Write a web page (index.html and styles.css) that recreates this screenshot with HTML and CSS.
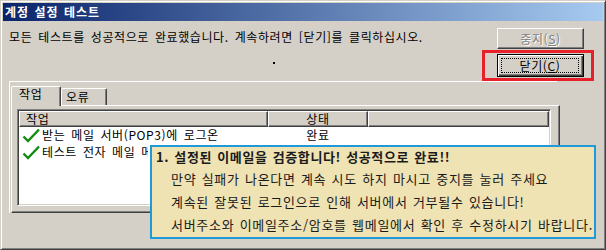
FILE: index.html
```html
<!DOCTYPE html>
<html lang="ko">
<head>
    <meta charset="utf-8">
    <title>계정 설정 테스트</title>
    <link rel="stylesheet" href="styles.css">
</head>
<body>
    <div class="window">
        <div class="titlebar">계정 설정 테스트</div>

        <div class="top">
            <div class="msg">
                <div class="msg-text">모든 테스트를 성공적으로 완료했습니다. 계속하려면 [닫기]를 클릭하십시오.</div>
                <div class="dot"></div>
            </div>
            <div class="buttons">
                <div class="btn btn-stop">중지(<u>S</u>)</div>
                <div class="highlight">
                    <div class="btn btn-close"><span class="focus">닫기(<u>C</u>)</span></div>
                </div>
            </div>
        </div>

        <div class="frame">
            <div class="tabs">
                <div class="tab active">작업</div>
                <div class="tab">오류</div>
            </div>
            <div class="panel">
                <div class="list">
                    <div class="lv-head">
                        <div class="hcell col1">작업</div>
                        <div class="hcell col2">상태</div>
                        <div class="hcell col3"></div>
                    </div>
                    <div class="row">
                        <div class="cell col1">
                            <svg class="check" width="18" height="15" viewBox="0 0 18 15"><path d="M1.5 8.5 L6 13 L17 1.5" fill="none" stroke="#138a13" stroke-width="2.4" stroke-linejoin="miter"/></svg>
                            <span>받는 메일 서버(POP3)에 로그온</span>
                        </div>
                        <div class="cell col2">완료</div>
                    </div>
                    <div class="row">
                        <div class="cell col1">
                            <svg class="check" width="18" height="15" viewBox="0 0 18 15"><path d="M1.5 8.5 L6 13 L17 1.5" fill="none" stroke="#138a13" stroke-width="2.4" stroke-linejoin="miter"/></svg>
                            <span class="clipped">테스트 전자 메일 메시지 보내기</span>
                        </div>
                        <div class="cell col2"></div>
                    </div>
                </div>
            </div>
        </div>

        <div class="tip">
            <div class="tip-title">1. 설정된 이메일을 검증합니다! 성공적으로 완료!!</div>
            <div class="tip-line">만약 실패가 나온다면 계속 시도 하지 마시고 중지를 눌러 주세요</div>
            <div class="tip-line">계속된 잘못된 로그인으로 인해 서버에서 거부될수 있습니다!</div>
            <div class="tip-line">서버주소와 이메일주소/암호를 웹메일에서 확인 후 수정하시기 바랍니다.</div>
        </div>
    </div>
</body>
</html>
```

FILE: styles.css
```css
body {
    margin: 0;
}
.window {
    position: relative;
    width: 606px;
    height: 250px;
    box-sizing: border-box;
    padding: 2px;
    background: #d4d0c8;
    border: 1px solid;
    border-color: #d4d0c8 #404040 #404040 #d4d0c8;
    box-shadow: inset 1px 1px #fff, inset -1px -1px #808080;
    font: 12px "Noto Sans CJK KR", sans-serif;
    letter-spacing: 0.6px;
    word-spacing: 2px;
    color: #000;
    overflow: hidden;
}
.titlebar {
    height: 18px;
    padding-left: 2px;
    line-height: 18px;
    background: linear-gradient(to right, #0a246a, #a6caf0);
    color: #fff;
    font-weight: bold;
    letter-spacing: 1px;
    word-spacing: 1px;
}
.top {
    display: flex;
    height: 60px;
}
.msg {
    flex: 1;
    padding: 8px 0 0 6px;
}
.msg-text {
    line-height: 16px;
}
.dot {
    width: 2px;
    height: 2px;
    margin: 17px 0 0 264px;
    background: #000;
}
.buttons {
    display: flex;
    flex-direction: column;
    width: 87px;
    margin-right: 19px;
}
.btn {
    box-sizing: border-box;
    height: 21px;
    line-height: 19px;
    text-align: center;
    border: 1px solid;
    border-color: #fff #404040 #404040 #fff;
    box-shadow: inset -1px -1px #808080;
}
.btn-stop {
    margin-top: 7px;
    color: #808080;
    text-shadow: 1px 1px #fff;
}
.highlight {
    margin: 1px -10px 0 -15px;
    padding: 1px 7px 1px 12px;
    border: 3px solid #e8202a;
}
.btn-close {
    height: 23px;
    border: 1px solid #000;
    box-shadow: inset 1px 1px #fff, inset -1px -1px #404040, inset -2px -2px #808080;
}
.focus {
    display: block;
    box-sizing: border-box;
    height: 15px;
    margin: 3px 4px 0 3px;
    line-height: 13px;
    border: 1px dotted #000;
}
.frame {
    box-sizing: border-box;
    width: 548px;
    height: 132px;
    margin-left: 6px;
    padding: 4px 0 0 1px;
    border-top: 1px solid #fff;
    border-left: 1px solid #fff;
}
.tabs {
    display: flex;
    align-items: flex-end;
    height: 19px;
}
.tab {
    box-sizing: border-box;
    width: 46px;
    height: 17px;
    padding-left: 4px;
    line-height: 15px;
    border: 1px solid;
    border-bottom: none;
    border-color: #fff #404040 transparent #fff;
    border-radius: 2px 2px 0 0;
    box-shadow: inset -1px 0 #808080;
    background: #d4d0c8;
}
.tab.active {
    position: relative;
    z-index: 1;
    width: 50px;
    height: 20px;
    margin-bottom: -1px;
    padding: 0 0 0 7px;
    line-height: 14px;
}
.panel {
    box-sizing: border-box;
    width: 549px;
    height: 108px;
    padding: 3px 0 0 5px;
    border: 1px solid;
    border-color: #fff #404040 #404040 #fff;
    box-shadow: inset -1px -1px #808080;
}
.list {
    box-sizing: border-box;
    width: 534px;
    height: 97px;
    padding: 1px;
    background: #fff;
    border: 1px solid;
    border-color: #808080 #fff #fff #808080;
    box-shadow: inset 1px 1px #404040, inset -1px -1px #d4d0c8;
}
.lv-head {
    display: flex;
    height: 16px;
}
.hcell {
    box-sizing: border-box;
    height: 16px;
    line-height: 13px;
    border: 1px solid;
    border-color: #fff #404040 #404040 #fff;
    box-shadow: inset -1px -1px #808080;
    background: #d4d0c8;
}
.col1 {
    width: 249px;
}
.col2 {
    width: 100px;
    text-align: center;
}
.col3 {
    flex: 1;
}
.hcell.col1 {
    padding-left: 6px;
}
.row {
    display: flex;
    height: 17px;
}
.cell {
    display: flex;
    align-items: flex-start;
    line-height: 12px;
}
.cell.col2 {
    justify-content: center;
    padding-top: 2px;
}
.check {
    flex: none;
    margin: 1px 2px 0 3px;
}
.cell span {
    padding-top: 2px;
    white-space: nowrap;
}
.cell .clipped {
    width: 106px;
    overflow: hidden;
}
.tip {
    position: absolute;
    left: 149px;
    top: 144px;
    z-index: 2;
    box-sizing: border-box;
    width: 446px;
    height: 94px;
    padding-left: 4px;
    background: #efe2b3;
    border: 2px solid #1e9ad8;
    font-size: 13px;
    letter-spacing: 0.7px;
    word-spacing: 1px;
    white-space: nowrap;
    color: #1a1a1a;
}
.tip-title {
    line-height: 20px;
    font-weight: bold;
    letter-spacing: 0.6px;
}
.tip-line {
    padding-left: 15px;
    line-height: 23px;
}
```
